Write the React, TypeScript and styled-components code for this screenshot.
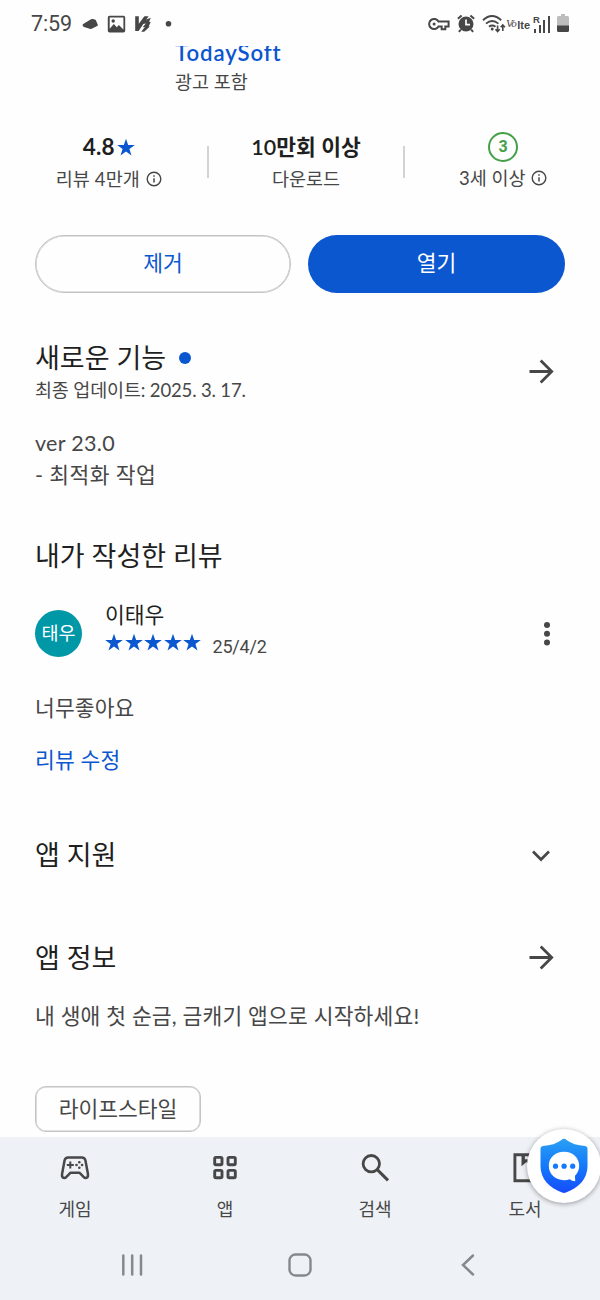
import React from "react";
import styled, { createGlobalStyle } from "styled-components";

const INK = "#1f1f1f";
const GREY = "#474747";
const BLUE = "#0b57d0";

const GlobalStyle = createGlobalStyle`
  * { box-sizing: border-box; }
  body {
    margin: 0;
    background: #fefefe;
    font-family: Lato, "Noto Sans CJK KR", sans-serif;
    color: ${GREY};
  }
  button { font: inherit; color: inherit; background: none; border: 0; padding: 0; }
  svg { display: block; flex: none; }
`;

const Screen = styled.div`
  position: relative;
  width: 600px;
  height: 1300px;
  overflow: hidden;
  display: flex;
  flex-direction: column;
  background: #fefefe;
`;

const StatusBar = styled.header`
  height: 46px;
  flex: none;
  display: flex;
  align-items: center;
  justify-content: space-between;
  padding: 1px 31px 0 31px;
`;

const StatusGroup = styled.div<{ $gap: number }>`
  display: flex;
  align-items: center;
  gap: ${(p) => p.$gap}px;
`;

const Clock = styled.span`
  font: 400 21.5px/24px Roboto, sans-serif;
  letter-spacing: -0.1px;
  width: 42px;
  white-space: nowrap;
`;

const Main = styled.main`
  flex: none;
  height: 1091px;
  overflow: hidden;
  padding: 0 35px;
  display: flex;
  flex-direction: column;
`;

const Text = styled.div<{
  $size: number;
  $line: number;
  $color?: string;
  $weight?: number;
  $track?: number;
}>`
  font-size: ${(p) => p.$size}px;
  line-height: ${(p) => p.$line}px;
  color: ${(p) => p.$color ?? GREY};
  font-weight: ${(p) => p.$weight ?? 400};
  letter-spacing: ${(p) => p.$track ?? 0}px;
  white-space: nowrap;
`;

const Developer = styled.div`
  height: 50px;
  padding-left: 140px;
  overflow: hidden;
  flex: none;
`;

const DeveloperName = styled(Text)`
  margin-top: -8px;
`;

const Stats = styled.section`
  display: flex;
  height: 62px;
  margin: 35px -36px 0 -24px;
  align-items: center;
  flex: none;
`;

const Stat = styled.div<{ $width: number }>`
  width: ${(p) => p.$width}px;
  height: 62px;
  display: flex;
  flex-direction: column;
  align-items: center;
`;

const StatRow = styled.div<{ $gap?: number; $height: number }>`
  display: flex;
  align-items: center;
  height: ${(p) => p.$height}px;
  gap: ${(p) => p.$gap ?? 0}px;
`;

const Separator = styled.div`
  width: 2px;
  height: 32px;
  background: #d3d3d3;
`;

const AgeBadge = styled.div`
  width: 30px;
  height: 30px;
  border: 2px solid #43a047;
  border-radius: 50%;
  color: #43a047;
  font: 700 16px/26px Roboto, sans-serif;
  text-align: center;
`;

const Actions = styled.div`
  display: flex;
  justify-content: space-between;
  margin-top: 42px;
  flex: none;
`;

const ActionButton = styled.button<{ $primary?: boolean }>`
  width: ${(p) => (p.$primary ? 257 : 256)}px;
  height: 58px;
  padding-bottom: 3px;
  border-radius: 29px;
  border: ${(p) => (p.$primary ? "0" : "1px solid #c4c4c4")};
  box-shadow: ${(p) => (p.$primary ? "none" : "inset 0 0 0 0.6px #c4c4c4")};
  background: ${(p) => (p.$primary ? BLUE : "transparent")};
  color: ${(p) => (p.$primary ? "#fff" : BLUE)};
  font-size: 21.5px;
  line-height: 32px;
`;

const Section = styled.section<{ $top: number }>`
  margin-top: ${(p) => p.$top}px;
  flex: none;
`;

const SectionHead = styled.div<{ $height: number }>`
  display: flex;
  justify-content: space-between;
  align-items: center;
  height: ${(p) => p.$height}px;
  padding-right: 10px;
`;

const TitleRow = styled.div`
  display: flex;
  align-items: center;
  gap: 13px;
`;

const NewDot = styled.span`
  width: 12px;
  height: 12px;
  border-radius: 50%;
  background: ${BLUE};
`;

const Body = styled.div<{ $top: number }>`
  margin-top: ${(p) => p.$top}px;
`;

const Reviewer = styled.div`
  display: flex;
  height: 60px;
  margin-top: 24px;
  padding-right: 14px;
  align-items: center;
`;

const Avatar = styled.div`
  width: 47px;
  height: 47px;
  margin-right: 23px;
  margin-top: 11px;
  border-radius: 50%;
  background: #0097a7;
  color: #fff;
  font-size: 18.5px;
  line-height: 46px;
  text-align: center;
`;

const ReviewerInfo = styled.div`
  flex: 1;
`;

const Stars = styled.div`
  display: flex;
  gap: 1.5px;
  height: 26px;
  align-items: center;
`;

const ReviewDate = styled.span`
  font: 400 18px/26px Roboto, sans-serif;
  letter-spacing: -0.2px;
  margin: 9px 0 0 10px;
`;

const MoreButton = styled.button`
  margin-top: 12px;
`;

const Chip = styled.div`
  width: 166px;
  height: 46px;
  margin-top: 54px;
  border: 1px solid #c4c4c4;
  box-shadow: inset 0 0 0 0.6px #c4c4c4;
  border-radius: 11px;
  display: flex;
  align-items: center;
  justify-content: center;
  flex: none;
`;

const BottomArea = styled.footer`
  flex: 1;
  background: #eef2f7;
`;

const Tabs = styled.nav`
  height: 94px;
  display: flex;
`;

const Tab = styled.button`
  flex: 1;
  display: flex;
  flex-direction: column;
  align-items: center;
  padding-top: 15px;
  gap: 12px;
`;

const SystemNav = styled.div`
  height: 68px;
  display: flex;
  justify-content: space-between;
  align-items: center;
  padding: 0 124px 0 120px;
`;

const ChatShield = styled.div`
  position: absolute;
  left: 527px;
  top: 1129px;
  width: 74px;
  height: 74px;
  border-radius: 50%;
  background: #fff;
  box-shadow: 0 1px 5px rgba(0, 0, 0, 0.38);
  display: flex;
  align-items: center;
  justify-content: center;
`;

const Star = ({ size = 18 }: { size?: number }) => (
  <svg width={size} height={size} viewBox="1.5 1.5 21 20" fill={BLUE}>
    <path d="M12 1.8l2.5 7.4h7.8l-6.3 4.6 2.4 7.5L12 16.7l-6.4 4.6L8 13.8 1.7 9.2h7.8z" />
  </svg>
);

const Info = () => (
  <svg width="16" height="16" viewBox="0 0 16 16" fill="none" stroke={GREY}>
    <circle cx="8" cy="8" r="6.8" strokeWidth="1.4" />
    <path d="M8 7.2v4.2M8 4.2v1.6" strokeWidth="1.5" />
  </svg>
);

const ArrowRight = () => (
  <svg width="28" height="28" viewBox="0 0 28 28" fill="none" stroke={GREY} strokeWidth="2.8">
    <path d="M2.500 13.500H23.500M13.700 2.500l11 11-11 11" />
  </svg>
);

const ChevronDown = () => (
  <svg width="28" height="28" viewBox="0 0 28 28" fill="none" stroke={GREY} strokeWidth="2.7">
    <path d="M6 10.5l8 8 8-8" />
  </svg>
);

const More = () => (
  <svg width="8" height="26" viewBox="0 0 8 26" fill={GREY}>
    <circle cx="4" cy="4" r="3" />
    <circle cx="4" cy="12.800" r="3" />
    <circle cx="4" cy="21.600" r="3" />
  </svg>
);

const NotificationIcons = () => (
  <svg width="92" height="24" viewBox="82 11 92 24" fill={GREY}>
    <path d="M82.800 23.200l8.200-4.900q1-.6 2.200-.2l2.600 1 2 4.600q.3 1-.6 1.300l-5 2.600q-1.200.5-2.500.1l-5.700-1.700q-2-.8-1.200-2.800z" />
    <path
      fillRule="evenodd"
      d="M109.500 14.700h14q1.700 0 1.700 1.700v13.400q0 1.700-1.700 1.700h-14q-1.700 0-1.700-1.700V16.400q0-1.700 1.700-1.700zm.2 1.700v11.300l4.100-4.600 3 3.200 2.100-2.300 4.500 4.600V16.400z"
    />
    <circle cx="113.200" cy="20" r="1.700" />
    <path d="M135.200 15.200h3.600v7.600l5.600-7.600h4.200l-10 14.800h-3.400z" />
    <path d="M144.500 19.200l6.300-2.400-1.700 4 1.600.2-2 4.500h1.100l-5.600 5.200h-3l3.700-4.600-2.300.2 3.300-3.800-3 .4z" />
    <circle cx="168.500" cy="22.700" r="2.800" />
  </svg>
);

const KeyIcon = () => (
  <svg width="22" height="14" viewBox="0 0 22 14" fill="none" stroke={GREY}>
    <path d="M10.500 4.600a5 5 0 1 0 0 4.800h3.200v2.800h3.600V9.400h3.300V4.600z" strokeWidth="2" />
    <circle cx="6.100" cy="7" r="1.500" fill={GREY} stroke="none" />
  </svg>
);

const AlarmIcon = () => (
  <svg width="20" height="19" viewBox="-1 0 20 19" fill={GREY}>
    <circle cx="9" cy="10" r="7.500" />
    <path d="M.9 4.700l3.700-3.200M17.100 4.700l-3.700-3.200M3.800 15.600l-1.900 2.200M14.200 15.600l1.900 2.200" stroke={GREY} strokeWidth="2" />
    <path d="M9 5.400v5.200h4" stroke="#fefefe" strokeWidth="1.700" fill="none" />
  </svg>
);

const WifiIcon = () => (
  <svg width="24" height="19" viewBox="0 0 24 19" fill="none" stroke={GREY} strokeWidth="1.900">
    <path d="M1 6.200q9-8.200 18.200 0M4 9.600q6.200-5.400 12.400 0M7 12.800q3.200-2.500 6.500 0" />
    <circle cx="10.200" cy="15" r="1.500" fill={GREY} stroke="none" />
    <path d="M15.600 11.500v6M13.500 15.300l2.100 2.200 2.100-2.200M20.800 17v-6M18.700 13.200l2.100-2.200 2.100 2.200" strokeWidth="1.600" />
  </svg>
);

const LteLabel = styled.span`
  width: 24px;
  margin: 2px -2px 0 -6px;
  white-space: nowrap;
  font: 700 11px/20px "Liberation Sans", sans-serif;
  display: flex;
  justify-content: flex-end;
  align-items: center;
  i { font: italic 400 11px/16px "Liberation Serif", serif; letter-spacing: -1.6px; margin: -3px 2px 0 0; }
`;

const Signal = styled.div`
  display: flex;
  align-items: flex-end;
  justify-content: space-between;
  height: 18px;
  width: 16px;
  margin: 0 1px 0 0;
  position: relative;
`;

const SignalBar = styled.span<{ $h: number }>`
  width: 2px;
  height: ${(p) => p.$h}px;
  background: ${GREY};
`;

const Roaming = styled.span`
  position: absolute;
  left: -1px;
  top: 0;
  font: 700 9.5px/9px "Liberation Sans", sans-serif;
`;

const BatteryIcon = () => (
  <svg width="12" height="19" viewBox="0 0 12 19">
    <path d="M4 0h4v2h2.500q1.500 0 1.500 1.500V12H0V3.500Q0 2 1.500 2H4z" fill="#bdbdbd" />
    <path d="M0 11.500h12v5q0 1.500-1.500 1.500h-9Q0 18 0 16.500z" fill={GREY} />
  </svg>
);

const GameIcon = () => (
  <svg width="32" height="32" viewBox="0 0 32 32" fill="none" stroke={GREY}>
    <path
      d="M9.200 5.400h13.600q3 0 3.600 2.800l2.500 13.500q.5 3.600-1.500 4.200-1.500.4-2.600-.8l-4.400-4.400h-8.800l-4.400 4.400q-1.100 1.200-2.600.8-2-.6-1.500-4.200L5.600 8.200q.6-2.800 3.600-2.800z"
      strokeWidth="2.500"
      strokeLinejoin="round"
    />
    <path d="M11.300 9.400v7M7.800 12.900h7" strokeWidth="2" />
    <g fill={GREY} stroke="none">
      <circle cx="20.300" cy="10.200" r="1.300" />
      <circle cx="20.300" cy="15.800" r="1.300" />
      <circle cx="17.500" cy="13" r="1.300" />
      <circle cx="23.100" cy="13" r="1.300" />
    </g>
  </svg>
);

const AppsIcon = () => (
  <svg width="32" height="32" viewBox="0 0 32 32" fill="none" stroke={GREY} strokeWidth="2.900">
    <rect x="5.700" y="5.400" width="7.300" height="7.300" rx="1.200" />
    <rect x="19" y="5.400" width="7.300" height="7.300" rx="1.200" />
    <rect x="5.700" y="18.400" width="7.300" height="7.300" rx="1.200" />
    <rect x="19" y="18.400" width="7.300" height="7.300" rx="1.200" />
  </svg>
);

const SearchIcon = () => (
  <svg width="32" height="32" viewBox="0 0 32 32" fill="none" stroke={GREY} strokeWidth="2.800">
    <circle cx="12.300" cy="11.700" r="8.200" />
    <path d="M18 17.400l11 11" strokeWidth="3" />
  </svg>
);

const BookIcon = () => (
  <svg width="32" height="32" viewBox="0 0 32 32" fill="none" stroke={GREY} strokeWidth="2.900">
    <path d="M5.900 2.800h20.200v26H5.900z" />
    <path d="M12.500 2.800v11.500l5-4.200 5 4.200V2.800h-3.200v4.500h-3.400V2.800z" fill={GREY} stroke="none" />
  </svg>
);

const RecentsIcon = () => (
  <svg width="24" height="24" viewBox="0 0 24 24" stroke="#85898d" strokeWidth="2.500" strokeLinecap="round">
    <path d="M3.300 2.500v19M12.200 2.500v19M21 2.500v19" />
  </svg>
);

const HomeButton = styled.button`
  margin-right: 4px;
`;

const HomeIcon = () => (
  <svg width="24" height="24" viewBox="0 0 24 24" fill="none" stroke="#85898d" strokeWidth="2.400">
    <rect x="1.500" y="1.500" width="21" height="21" rx="6" />
  </svg>
);

const BackIcon = () => (
  <svg width="16" height="24" viewBox="0 0 16 24" fill="none" stroke="#85898d" strokeWidth="2.500" strokeLinecap="round">
    <path d="M13 2.500L3 12l10 9.500" />
  </svg>
);

const ShieldIcon = () => (
  <svg width="48" height="56" viewBox="0 0 48 56">
    <defs>
      <linearGradient id="shield" x1="0" y1="0" x2="0" y2="1">
        <stop offset="0" stopColor="#2aa0f4" />
        <stop offset="0.5" stopColor="#1479fb" />
        <stop offset="1" stopColor="#164cfb" />
      </linearGradient>
    </defs>
    <path
      d="M24 .8q1.200 0 2.600 1.200 7 5.300 18.400 6 2.500.2 2.500 2.500v17.500c0 13-9 22-21.500 26.500q-2 .8-4 0C9.500 50 .5 41 .5 28V10.500Q.5 8.200 3 8q11.400-.7 18.400-6Q22.800.8 24 .8z"
      fill="url(#shield)"
    />
    <path d="M24 13.800c8.700 0 15.200 6 15.200 14 0 4-1.700 7.500-4.200 10l.2 5.500q-3.500-.2-5.400-2-2.600.9-5.800.9c-8.700 0-15.200-6.200-15.200-14.400s6.500-14 15.200-14z" fill="#fff" />
    <g fill="#1479fb">
      <circle cx="15.500" cy="28.200" r="2.600" />
      <circle cx="24.100" cy="28.200" r="2.600" />
      <circle cx="32.700" cy="28.200" r="2.600" />
    </g>
  </svg>
);

const tabs = [
  { label: "게임", icon: <GameIcon /> },
  { label: "앱", icon: <AppsIcon /> },
  { label: "검색", icon: <SearchIcon /> },
  { label: "도서", icon: <BookIcon /> },
];

export default function App() {
  return (
    <Screen>
      <GlobalStyle />
      <StatusBar>
        <StatusGroup $gap={9}>
          <Clock>7:59</Clock>
          <NotificationIcons />
        </StatusGroup>
        <StatusGroup $gap={6}>
          <KeyIcon />
          <AlarmIcon />
          <WifiIcon />
          <LteLabel><i>V⁄o</i>lte</LteLabel>
          <Signal>
            <Roaming>R</Roaming>
            <SignalBar $h={4} />
            <SignalBar $h={8} />
            <SignalBar $h={13} />
            <SignalBar $h={17} />
          </Signal>
          <BatteryIcon />
        </StatusGroup>
      </StatusBar>

      <Main>
        <Developer>
          <DeveloperName $size={22.2} $line={30} $color={BLUE} $weight={600} $track={0.9}>TodaySoft</DeveloperName>
          <Text $size={18.5} $line={28}>광고 포함</Text>
        </Developer>

        <Stats>
          <Stat $width={196}>
            <StatRow $height={32} $gap={2}>
              <Text $size={22.5} $line={32} $color={INK} $weight={700} $track={0.2}>4.8</Text>
              <Star />
            </StatRow>
            <StatRow $height={32} $gap={6}>
              <Text $size={18.5} $line={32} $track={0.1}>리뷰 4만개</Text>
              <Info />
            </StatRow>
          </Stat>
          <Separator />
          <Stat $width={195}>
            <Text $size={21.5} $line={32} $color={INK} $weight={600}>10만회 이상</Text>
            <Text $size={18.5} $line={32}>다운로드</Text>
          </Stat>
          <Separator />
          <Stat $width={196}>
            <StatRow $height={32}><AgeBadge>3</AgeBadge></StatRow>
            <StatRow $height={30} $gap={6}>
              <Text $size={18.5} $line={30}>3세 이상</Text>
              <Info />
            </StatRow>
          </Stat>
        </Stats>

        <Actions>
          <ActionButton>제거</ActionButton>
          <ActionButton $primary>열기</ActionButton>
        </Actions>

        <Section $top={46}>
          <SectionHead $height={65}>
            <div>
              <TitleRow>
                <Text $size={27} $line={36} $color={INK}>새로운 기능</Text>
                <NewDot />
              </TitleRow>
              <Text $size={18.5} $line={28} $track={-0.15}>최종 업데이트: 2025. 3. 17.</Text>
            </div>
            <ArrowRight />
          </SectionHead>
          <Body $top={23}>
            <Text $size={21.5} $line={32} $track={0.3}>ver 23.0</Text>
            <Text $size={21.5} $line={32} $track={0.4}>- 최적화 작업</Text>
          </Body>
        </Section>

        <Section $top={47}>
          <Text $size={27} $line={36} $color={INK}>내가 작성한 리뷰</Text>
          <Reviewer>
            <Avatar>태우</Avatar>
            <ReviewerInfo>
              <Text $size={21.5} $line={28} $color={INK}>이태우</Text>
              <Stars>
                <Star /><Star /><Star /><Star /><Star />
                <ReviewDate>25/4/2</ReviewDate>
              </Stars>
            </ReviewerInfo>
            <MoreButton aria-label="더보기"><More /></MoreButton>
          </Reviewer>
          <Body $top={24}>
            <Text $size={21.5} $line={52} $track={0.1}>너무좋아요</Text>
            <Text $size={21.5} $line={52} $color={BLUE} $track={0.15}>리뷰 수정</Text>
          </Body>
        </Section>

        <Section $top={49}>
          <SectionHead $height={40}>
            <Text $size={27} $line={40} $color={INK}>앱 지원</Text>
            <ChevronDown />
          </SectionHead>
        </Section>

        <Section $top={63}>
          <SectionHead $height={40}>
            <Text $size={27} $line={40} $color={INK}>앱 정보</Text>
            <ArrowRight />
          </SectionHead>
          <Body $top={22}>
            <Text $size={21.5} $line={32} $track={0.18}>내 생애 첫 순금, 금캐기 앱으로 시작하세요!</Text>
          </Body>
          <Chip><Text $size={21.5} $line={32}>라이프스타일</Text></Chip>
        </Section>
      </Main>

      <BottomArea>
        <Tabs>
          {tabs.map((t) => (
            <Tab key={t.label}>
              {t.icon}
              <Text $size={18} $line={26}>{t.label}</Text>
            </Tab>
          ))}
        </Tabs>
        <SystemNav>
          <RecentsIcon />
          <HomeButton aria-label="홈"><HomeIcon /></HomeButton>
          <BackIcon />
        </SystemNav>
      </BottomArea>

      <ChatShield><ShieldIcon /></ChatShield>
    </Screen>
  );
}
